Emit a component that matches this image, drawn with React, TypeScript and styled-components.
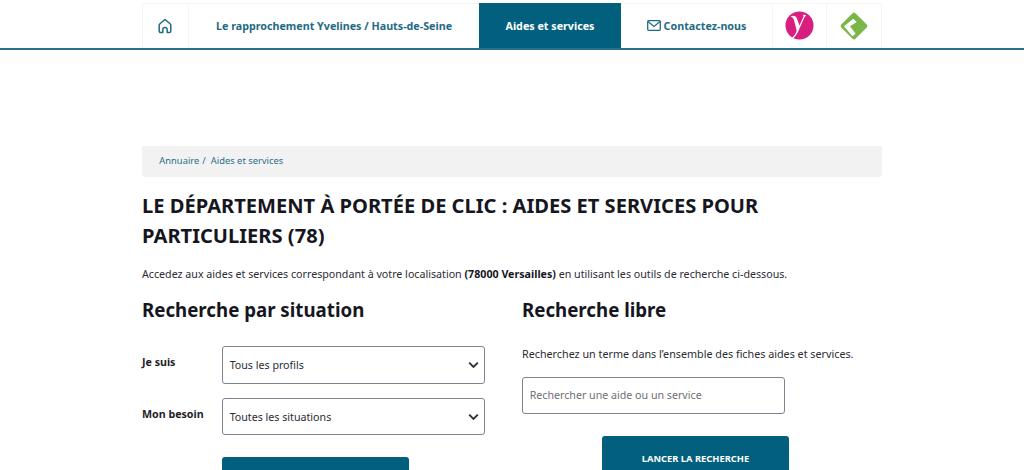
import React from "react";
import styled, { createGlobalStyle } from "styled-components";

const Global = createGlobalStyle`
  html, body { margin: 0; padding: 0; height: 470px; overflow: hidden; background: #fff; }
  body { font-family: "Noto Sans", "Open Sans", "Liberation Sans", sans-serif; color: #1b1b25; }
  * { box-sizing: border-box; }
`;

const Header = styled.header`
  height: 50px;
  padding-top: 3px;
  border-bottom: 2px solid #2a6f8a;
`;
const Nav = styled.nav`
  width: 740px;
  height: 45px;
  margin: 0 auto;
  display: flex;
`;
const NavCell = styled.a<{ $w: number; $active?: boolean; $sep?: boolean; $first?: boolean }>`
  flex: 0 0 ${(p) => p.$w}px;
  display: flex;
  align-items: center;
  justify-content: center;
  gap: 3px;
  padding: 0 ${(p) => (p.$first ? 1 : 0)}px 1px 0;
  font-size: 10.72px;
  font-weight: 700;
  color: ${(p) => (p.$active ? "#fff" : "#1f6a85")};
  background: ${(p) => (p.$active ? "#025f7d" : "transparent")};
  border-top: 1px solid ${(p) => (p.$active ? "#025f7d" : "#f5f5f5")};
  border-left: ${(p) => (p.$first ? "1px solid #f5f5f5" : "0")};
  border-right: ${(p) => (p.$sep ? "1px solid #f5f5f5" : "0")};
`;
const Main = styled.main`
  width: 740px;
  margin: 96px auto 0;
`;
const Crumbs = styled.div`
  height: 31px;
  background: #f2f2f2;
  border-radius: 3px;
  padding: 0 0 3px 17.3px;
  display: flex;
  align-items: center;
  font-size: 9.37px;
  color: #2b6e87;
`;
const Sep = styled.span`
  margin: 0 5px 0 3px;
`;
const Title = styled.h1`
  margin: 14px 0 0;
  font-size: 20.1px;
  line-height: 30px;
  font-weight: 700;
  color: #16161f;
`;
const Intro = styled.p`
  margin: 15px 0 0;
  font-size: 10.68px;
  line-height: 16px;
  color: #2b2b33;
  b { font-weight: 700; color: #16161f; }
`;
const Columns = styled.div`
  margin-top: 14px;
  display: grid;
  grid-template-columns: 380px 360px;
`;
const Col = styled.section`
  display: flex;
  flex-direction: column;
  align-items: flex-start;
`;
const H2 = styled.h2`
  margin: 1px 0 0;
  font-size: 18.7px;
  line-height: 26px;
  font-weight: 700;
  color: #16161f;
`;
const FieldRow = styled.div<{ $top: number }>`
  display: flex;
  margin-top: ${(p) => p.$top}px;
`;
const Label = styled.label`
  flex: 0 0 80px;
  padding-top: 8px;
  font-size: 10.67px;
  line-height: 16px;
  font-weight: 700;
  color: #1e1e28;
`;
const Select = styled.div`
  width: 263px;
  height: 37.33px;
  border: 1px solid #7b8591;
  border-radius: 3px;
  padding: 0 5px 0 6.67px;
  display: flex;
  align-items: center;
  justify-content: space-between;
  font-size: 10.67px;
  color: #2b2b33;
`;
const Button = styled.button<{ $top: number; $left: number }>`
  width: 187px;
  height: 50px;
  margin: ${(p) => p.$top}px 0 0 ${(p) => p.$left}px;
  padding: 0 0 5px;
  border: 0;
  border-radius: 3px;
  background: #025f7d;
  color: #fff;
  font-family: inherit;
  font-size: 9.33px;
  font-weight: 700;
  flex-shrink: 0;
`;
const Lead = styled.p`
  margin: 23px 0 0;
  font-size: 10.75px;
  line-height: 16px;
  color: #2b2b33;
`;
const SearchBox = styled.input`
  width: 263px;
  height: 37.33px;
  margin-top: 14.67px;
  border: 1px solid #7b8591;
  border-radius: 3px;
  padding: 0 6.67px;
  font-family: inherit;
  font-size: 10.67px;
  &::placeholder { color: #6f6f76; opacity: 1; }
`;

const Chevron = () => (
  <svg width="11" height="8" viewBox="0 0 11 8" fill="none">
    <path d="M1.2 1.6 5.500 6 9.800 1.600" stroke="#2d3138" strokeWidth="1.9" />
  </svg>
);

export default function App() {
  return (
    <>
      <Global />
      <Header>
        <Nav>
          <NavCell $w={47} $sep $first>
            <svg width="16" height="16" viewBox="0 0 16 16" fill="none">
              <path
                d="M5.800 14.600H3.800c-.9 0-1.600-.7-1.600-1.600V7.200c0-.6.2-1 .7-1.400L8 1.500l5.100 4.300c.5.4.7.8.7 1.400V13c0 .9-.7 1.600-1.600 1.600h-2v-2.800a2.200 2.200 0 0 0-4.400 0z"
                stroke="#1f6a85"
                strokeWidth="1.5"
                strokeLinejoin="round"
              />
            </svg>
          </NavCell>
          <NavCell $w={290}>Le rapprochement Yvelines / Hauts-de-Seine</NavCell>
          <NavCell $w={142} $active>Aides et services</NavCell>
          <NavCell $w={152} $sep>
            <svg width="14" height="11" viewBox="0 0 14 11" fill="none">
              <rect x=".7" y=".7" width="12.6" height="9.6" rx="1" stroke="#1f6a85" strokeWidth="1.3" />
              <path d="M1 1.6 7 6.400l6-4.800" stroke="#1f6a85" strokeWidth="1.3" />
            </svg>
            Contactez-nous
          </NavCell>
          <NavCell $w={54} $sep>
            <svg width="29" height="29" viewBox="0 0 29 29">
              <circle cx="14.5" cy="14.5" r="14" fill="#d81e7f" />
              <path
                d="M5.500 5.500c2.500-1.500 5-1 6.200 1.500l2.800 7.500 3.800-8.500c.5-1 .3-1.500-.6-2 1.200-.4 2.800-.3 3.500.4-.9.5-1.500 1.200-2 2.300l-5.700 13c-1.200 2.800-3 5.800-5.800 8.300l-1-.8c2.500-2.300 4-4.800 5-7.500L9 9c-.7-1.800-1.800-3-3.500-3.500z"
                fill="#fff"
              />
            </svg>
          </NavCell>
          <NavCell $w={55} $sep>
            <svg width="30" height="30" viewBox="0 0 30 30">
              <rect x="5" y="5" width="20" height="20" rx="2" transform="rotate(45 15 15)" fill="#7ab648" />
              <path d="M5 15.300 14.300 7.700 17.700 11 11 15.300 16.700 22.700 13.300 25.300z" fill="#fff" />
            </svg>
          </NavCell>
        </Nav>
      </Header>
      <Main>
        <Crumbs>
          Annuaire<Sep>/</Sep>Aides et services
        </Crumbs>
        <Title>LE DÉPARTEMENT À PORTÉE DE CLIC : AIDES ET SERVICES POUR PARTICULIERS (78)</Title>
        <Intro>
          Accedez aux aides et services correspondant à votre localisation <b>(78000 Versailles)</b> en utilisant les
          outils de recherche ci-dessous.
        </Intro>
        <Columns>
          <Col>
            <H2>Recherche par situation</H2>
            <FieldRow $top={23.3}>
              <Label>Je suis</Label>
              <Select>
                Tous les profils
                <Chevron />
              </Select>
            </FieldRow>
            <FieldRow $top={14.33}>
              <Label>Mon besoin</Label>
              <Select>
                Toutes les situations
                <Chevron />
              </Select>
            </FieldRow>
            <Button $top={22} $left={80}>LANCER LA RECHERCHE</Button>
          </Col>
          <Col>
            <H2>Recherche libre</H2>
            <Lead>Recherchez un terme dans l’ensemble des fiches aides et services.</Lead>
            <SearchBox placeholder="Rechercher une aide ou un service" />
            <Button $top={22} $left={80}>LANCER LA RECHERCHE</Button>
          </Col>
        </Columns>
      </Main>
    </>
  );
}
